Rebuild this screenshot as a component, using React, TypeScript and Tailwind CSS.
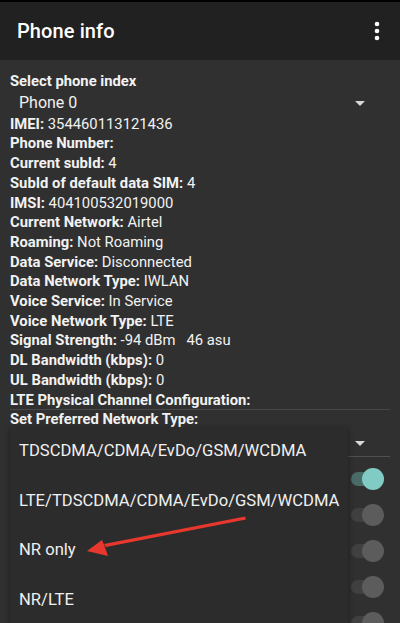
import React from "react";

const rows: [string, string][] = [
  ["IMEI:", "354460113121436"],
  ["Phone Number:", ""],
  ["Current subId:", "4"],
  ["SubId of default data SIM:", "4"],
  ["IMSI:", "404100532019000"],
  ["Current Network:", "Airtel"],
  ["Roaming:", "Not Roaming"],
  ["Data Service:", "Disconnected"],
  ["Data Network Type:", "IWLAN"],
  ["Voice Service:", "In Service"],
  ["Voice Network Type:", "LTE"],
  ["Signal Strength:", "-94 dBm\u00a0\u00a0 46 asu"],
  ["DL Bandwidth (kbps):", "0"],
  ["UL Bandwidth (kbps):", "0"],
  ["LTE Physical Channel Configuration:", ""],
];

const Caret = () => (
  <svg width="12" height="7" viewBox="0 0 12 7">
    <path d="M1 1 L11 1 L6 6 Z" fill="#d8d8d8" />
  </svg>
);

const Toggle = ({ on }: { on?: boolean }) => (
  <div className="relative w-[36px] h-[24px]">
    <div
      className={`absolute left-[2px] top-[5px] w-[32px] h-[14px] rounded-full ${
        on ? "bg-[#4a6c69]" : "bg-[#404040]"
      }`}
    />
    <div
      className={`absolute right-[1px] top-[1px] w-[22px] h-[22px] rounded-full ${
        on ? "bg-[#80cbc4]" : "bg-[#5c5c5c]"
      }`}
    />
  </div>
);

export default function App() {
  const font = { fontFamily: "Roboto, 'Noto Sans', sans-serif" };
  return (
    <div
      className="relative w-[400px] h-[623px] overflow-hidden bg-[#303030] text-[#f2f2f2]"
      style={font}
    >
      <div className="h-[2px] bg-black" />
      <div className="h-[58px] bg-[#212121] flex items-center justify-between pl-[17px] pr-[20px]">
        <span className="text-[20px] font-medium text-white tracking-[0.1px]">Phone info</span>
        <svg width="6" height="20" viewBox="0 0 6 20">
          <circle cx="3" cy="3" r="2.3" fill="#fff" />
          <circle cx="3" cy="10" r="2.3" fill="#fff" />
          <circle cx="3" cy="17" r="2.3" fill="#fff" />
        </svg>
      </div>

      <div className="px-[10px] pt-[12px] text-[14.8px] leading-[19.7px]">
        <div className="font-bold">Select phone index</div>
        <div className="flex items-center justify-between h-[23px] pl-[9px] pr-[24px]">
          <span className="text-[16px]">Phone 0</span>
          <Caret />
        </div>
        {rows.map(([k, v]) => (
          <div key={k} className="whitespace-nowrap">
            <span className="font-bold">{k}</span>
            {v ? <span> {v}</span> : null}
          </div>
        ))}
        <div className="h-[1px] bg-[#474747] mt-[-1px]" />
        <div className="font-bold">Set Preferred Network Type:</div>
        <div className="flex justify-end pr-[24px] pt-[10px] h-[26px]">
          <Caret />
        </div>
        <div className="ml-auto w-[42px] h-[1px] bg-[#505050]" />
        <div className="flex flex-col items-end pr-[5px] pt-[10px] gap-[12px]">
          <Toggle on />
          <Toggle />
          <Toggle />
          <Toggle />
          <Toggle />
        </div>
      </div>

      <div className="absolute left-[10px] top-[427px] w-[338px] h-[220px] bg-[#2c2c2c] shadow-[0_2px_6px_rgba(0,0,0,0.4)]">
        {["TDSCDMA/CDMA/EvDo/GSM/WCDMA", "LTE/TDSCDMA/CDMA/EvDo/GSM/WCDMA", "NR only", "NR/LTE"].map(
          (t) => (
            <div key={t} className="h-[49.5px] flex items-center pl-[9px] text-[16.6px] text-[#f0f0f0] whitespace-nowrap">
              {t}
            </div>
          )
        )}
      </div>

      <svg className="absolute left-0 top-0" width="400" height="623" viewBox="0 0 400 623">
        <path d="M245 516.5 L246 519.5 L106 547 L104 544 Z" fill="#e8382e" />
        <path d="M87 551 L102 540 L104.5 546 L108 556 Z" fill="#e8382e" />
      </svg>
    </div>
  );
}
